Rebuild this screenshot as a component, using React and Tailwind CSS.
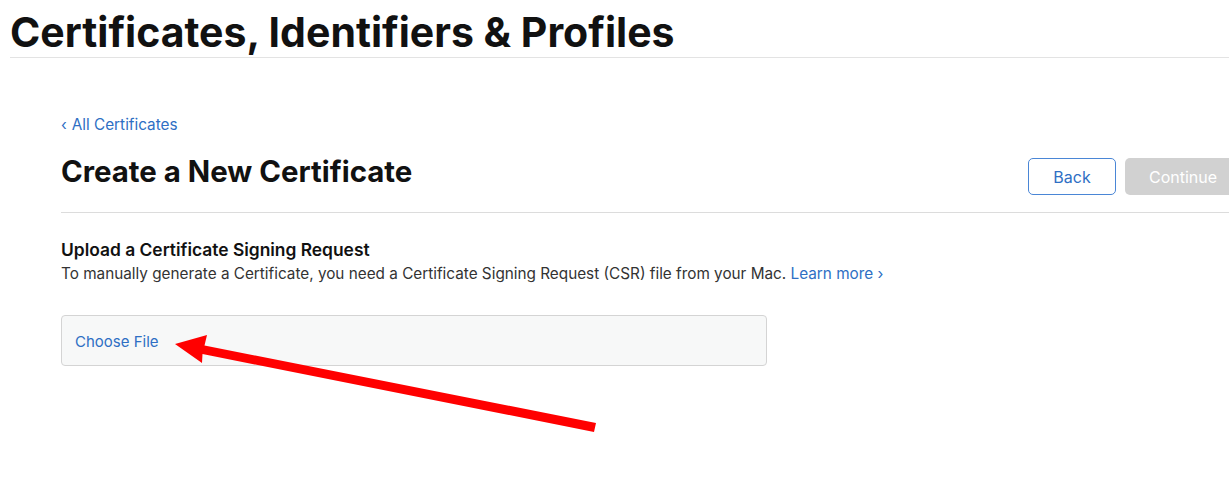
import React from 'react';

function Arrow() {
  // red annotation arrow pointing at the file picker
  return (
    <svg className="absolute left-0 top-0 pointer-events-none" width="1229" height="504" viewBox="0 0 1229 504">
      <polygon points="175,344 207,335 204.5,345.5 596,423 594,432 202.5,354 202,363" fill="#ff0000" />
    </svg>
  );
}

export default function App() {
  return (
    <div className="relative w-[1229px] h-[504px] overflow-hidden bg-white" style={{ fontFamily: 'Inter, "Liberation Sans", sans-serif' }}>
      <header className="pl-[10px]">
        <h1 className="text-[41px] leading-[48px] pt-[8px] font-bold text-[#111]">
          Certificates, Identifiers &amp; Profiles
        </h1>
        <div className="mt-[1px] h-px bg-[#e3e3e3]" />
      </header>

      <main className="pl-[61px] pt-[57px]">
        <a className="flex items-center gap-[5px] text-[15.3px] leading-[20px] text-[#2e6fc4]">
          <span className="text-[15px]">‹</span>
          <span>All Certificates</span>
        </a>

        <div className="mt-[13px] flex items-center justify-between">
          <h2 className="text-[29.4px] leading-[34px] font-bold text-[#111] pt-[1px]">Create a New Certificate</h2>
          <div className="flex items-center gap-[9px] mr-[-12px] mt-[10px]">
            <button className="w-[88px] h-[37px] rounded-[5px] border border-[#4a86d6] text-[16px] text-[#2e6fc4]">
              Back
            </button>
            <button className="w-[116px] h-[37px] rounded-[5px] bg-[#d1d1d1] text-[16px] text-white">
              Continue
            </button>
          </div>
        </div>

        <div className="mt-[17px] h-px bg-[#dcdcdc]" />

        <section className="pt-[26px]">
          <h3 className="text-[17.4px] leading-[22px] font-semibold text-[#111]">Upload a Certificate Signing Request</h3>
          <p className="mt-[3px] text-[15.3px] leading-[20px] text-[#333]">
            To manually generate a Certificate, you need a Certificate Signing Request (CSR) file from your Mac.{' '}
            <a className="text-[#2e6fc4]">Learn more ›</a>
          </p>

          <div className="mt-[31px] w-[706px] h-[51px] flex items-center pl-[13px] pt-[3px] rounded-[4px] border border-[#d4d4d4] bg-[#f7f8f8]">
            <span className="text-[15px] text-[#2e6fc4]">Choose File</span>
          </div>
        </section>
      </main>

      <Arrow />
    </div>
  );
}
